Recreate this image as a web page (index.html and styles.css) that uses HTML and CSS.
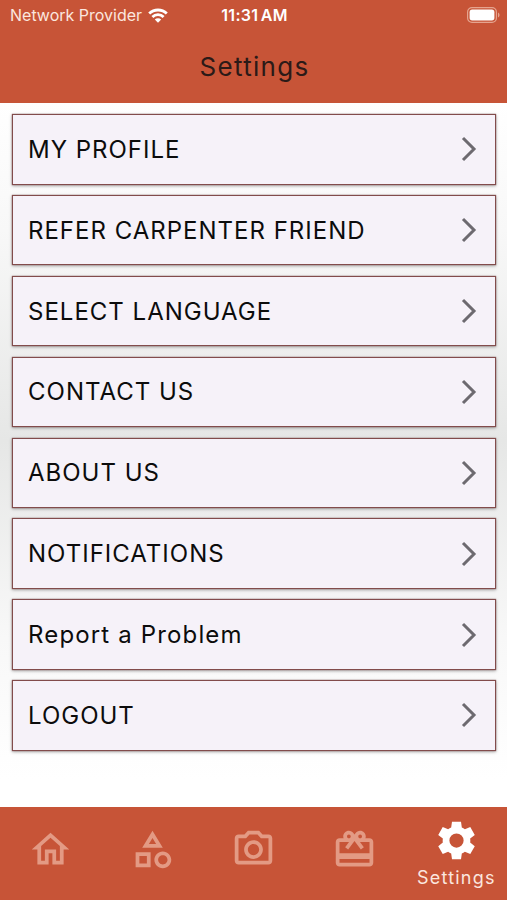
FILE: index.html
```html
<!DOCTYPE html>
<html lang="en">
<head>
    <meta charset="UTF-8">
    <meta name="viewport" content="width=device-width, initial-scale=1.0">
    <title>Settings</title>
    <link rel="stylesheet" href="styles.css">
</head>
<body>
    <!-- Status bar and title -->
    <header class="header">
        <div class="status-bar">
            <div class="carrier">
                <span class="carrier-name">Network Provider</span>
                <svg class="wifi" viewBox="0 0 20 15">
                    <path d="M1.2 5.6a12.6 12.6 0 0 1 17.6 0M4.4 8.9a8 8 0 0 1 11.2 0" fill="none" stroke="#fff" stroke-width="2.8"/>
                    <path d="M6.8 11.5a4.6 4.6 0 0 1 6.4 0L10 14.8z" fill="#fff"/>
                </svg>
            </div>
            <div class="time">11:31 AM</div>
            <div class="battery-wrap">
                <svg class="battery" viewBox="0 0 33 16">
                    <rect x=".6" y=".6" width="28.8" height="14.8" rx="4.4" fill="none" stroke="#e5a48f" stroke-width="1.2"/>
                    <rect x="2.6" y="2.6" width="24.8" height="10.8" rx="2.6" fill="#fff"/>
                    <path d="M31 5.5c2 .8 2 4.2 0 5z" fill="#e5a48f"/>
                </svg>
            </div>
        </div>
        <h1 class="title">Settings</h1>
    </header>

    <main class="menu">
        <a class="menu-item"><span>MY PROFILE</span><svg class="chevron" viewBox="0 0 16 26"><path d="M2 2l11 11L2 24"/></svg></a>
        <a class="menu-item"><span>REFER CARPENTER FRIEND</span><svg class="chevron" viewBox="0 0 16 26"><path d="M2 2l11 11L2 24"/></svg></a>
        <a class="menu-item"><span>SELECT LANGUAGE</span><svg class="chevron" viewBox="0 0 16 26"><path d="M2 2l11 11L2 24"/></svg></a>
        <a class="menu-item"><span>CONTACT US</span><svg class="chevron" viewBox="0 0 16 26"><path d="M2 2l11 11L2 24"/></svg></a>
        <a class="menu-item"><span>ABOUT US</span><svg class="chevron" viewBox="0 0 16 26"><path d="M2 2l11 11L2 24"/></svg></a>
        <a class="menu-item"><span>NOTIFICATIONS</span><svg class="chevron" viewBox="0 0 16 26"><path d="M2 2l11 11L2 24"/></svg></a>
        <a class="menu-item mixed-case"><span>Report a Problem</span><svg class="chevron" viewBox="0 0 16 26"><path d="M2 2l11 11L2 24"/></svg></a>
        <a class="menu-item"><span>LOGOUT</span><svg class="chevron" viewBox="0 0 16 26"><path d="M2 2l11 11L2 24"/></svg></a>
    </main>

    <!-- Bottom navigation -->
    <nav class="tab-bar">
        <a class="tab">
            <svg viewBox="0 0 24 24"><path d="M12 5.69l5 4.5V18h-2v-6H9v6H7v-7.81l5-4.5M12 3L2 12h3v8h6v-6h2v6h6v-8h3L12 3z"/></svg>
        </a>
        <a class="tab">
            <svg viewBox="0 0 24 24"><path d="M12 2l-5.5 9h11L12 2zm0 3.84L13.93 9h-3.87L12 5.84zM17.5 13c-2.49 0-4.5 2.01-4.5 4.5s2.01 4.5 4.5 4.5 4.5-2.01 4.5-4.5-2.01-4.5-4.5-4.5zm0 7c-1.38 0-2.5-1.12-2.5-2.5s1.12-2.5 2.5-2.5 2.5 1.12 2.5 2.5-1.12 2.5-2.5 2.5zM3 21.5h8v-8H3v8zm2-6h4v4H5v-4z"/></svg>
        </a>
        <a class="tab">
            <svg viewBox="0 0 24 24"><path d="M20 4h-3.17L15 2H9L7.17 4H4c-1.1 0-2 .9-2 2v12c0 1.1.9 2 2 2h16c1.1 0 2-.9 2-2V6c0-1.1-.9-2-2-2zm0 14H4V6h4.05l1.83-2h4.24l1.83 2H20v12zM12 7c-2.76 0-5 2.24-5 5s2.24 5 5 5 5-2.24 5-5-2.24-5-5-5zm0 8c-1.65 0-3-1.35-3-3s1.35-3 3-3 3 1.35 3 3-1.35 3-3 3z"/></svg>
        </a>
        <a class="tab">
            <svg viewBox="0 0 24 24"><path d="M20 6h-2.18c.11-.31.18-.65.18-1 0-1.66-1.34-3-3-3-1.05 0-1.96.54-2.5 1.35l-.5.67-.5-.68C10.96 2.54 10.05 2 9 2 7.34 2 6 3.34 6 5c0 .35.07.69.18 1H4c-1.11 0-1.99.89-1.99 2L2 19c0 1.11.89 2 2 2h16c1.11 0 2-.89 2-2V8c0-1.11-.89-2-2-2zm-5-2c.55 0 1 .45 1 1s-.45 1-1 1-1-.45-1-1 .45-1 1-1zM9 4c.55 0 1 .45 1 1s-.45 1-1 1-1-.45-1-1 .45-1 1-1zm11 15H4v-2h16v2zm0-5H4V8h5.08L7 10.83 8.62 12 11 8.76l1-1.36 1 1.36L15.38 12 17 10.83 14.92 8H20v6z"/></svg>
        </a>
        <a class="tab active">
            <svg viewBox="0 0 24 24"><path fill-rule="evenodd" d="M9.6 2h4.8l.44 3.06q.87.36 1.62.94l2.88-1.16 2.4 4.16-2.45 1.9q.16 1.1 0 2.2l2.45 1.9-2.4 4.16L16.46 18q-.75.58-1.62.94L14.4 22H9.6l-.44-3.06Q8.29 18.58 7.54 18l-2.88 1.16L2.26 15l2.45-1.9q-.16-1.1 0-2.2L2.26 9l2.4-4.16L7.54 6q.75-.58 1.62-.94zM12 8.2a3.8 3.8 0 1 0 0 7.6a3.8 3.8 0 1 0 0-7.6z"/></svg>
            <span>Settings</span>
        </a>
    </nav>
</body>
</html>
```

FILE: styles.css
```css
* {
    box-sizing: border-box;
}
body {
    margin: 0;
    height: 900px;
    display: flex;
    flex-direction: column;
    font-family: Inter, "Liberation Sans", sans-serif;
    overflow: hidden;
}
.header {
    height: 103px;
    background-color: #c75437;
}
.status-bar {
    display: grid;
    grid-template-columns: 1fr auto 1fr;
    align-items: center;
    height: 30px;
    padding: 0 7px 0 10px;
    color: #fff;
}
.carrier {
    display: flex;
    align-items: center;
    gap: 6px;
    color: #fbe6df;
    font-size: 16px;
}
.carrier-name {
    width: 132px;
    white-space: nowrap;
}
.wifi {
    width: 20px;
    height: 15px;
}
.time {
    font-size: 16px;
    font-weight: 600;
    letter-spacing: 0.3px;
    word-spacing: -2px;
    margin-right: 1px;
}
.battery-wrap {
    display: flex;
    justify-content: flex-end;
}
.battery {
    width: 33px;
    height: 16px;
}
.title {
    margin: 0;
    color: #2b1a17;
    font-size: 26px;
    font-weight: 400;
    line-height: 32px;
    letter-spacing: 1.3px;
    text-align: center;
    padding: 21px 0 0 2px;
}
.menu {
    flex: 1;
    display: flex;
    flex-direction: column;
    gap: 10.4px;
    padding: 11px 11px 0 12px;
    background: linear-gradient(#fff 0%, #f8f8f8 18%, #e6e7e6 48%, #f8f8f8 76%, #fff 96%);
}
.menu-item {
    display: flex;
    align-items: center;
    justify-content: space-between;
    height: 70.5px;
    padding: 0 18px 0 15px;
    border: 1px solid #824c4c;
    background-color: #f6f2f9;
    box-shadow: 0 0 1px #824c4c, 0 1px 3px rgba(0,0,0,0.35);
    color: #0c0c0c;
    font-size: 24px;
    letter-spacing: 1px;
}
.menu-item.mixed-case {
    letter-spacing: 1.15px;
}
.chevron {
    width: 16px;
    height: 26px;
    fill: none;
    stroke: #6d6a70;
    stroke-width: 3;
}
.tab-bar {
    display: flex;
    height: 93px;
    background-color: #c75437;
}
.tab {
    flex: 1;
    display: flex;
    flex-direction: column;
    align-items: center;
    padding-top: 20px;
    color: #e39a84;
}
.tab svg {
    width: 45px;
    height: 45px;
    fill: currentColor;
}
.tab.active {
    padding-top: 11px;
    color: #fff;
}
.tab span {
    color: #fbe6df;
    font-size: 18px;
    line-height: 22px;
    letter-spacing: 1.2px;
    margin-top: 4px;
}
```
